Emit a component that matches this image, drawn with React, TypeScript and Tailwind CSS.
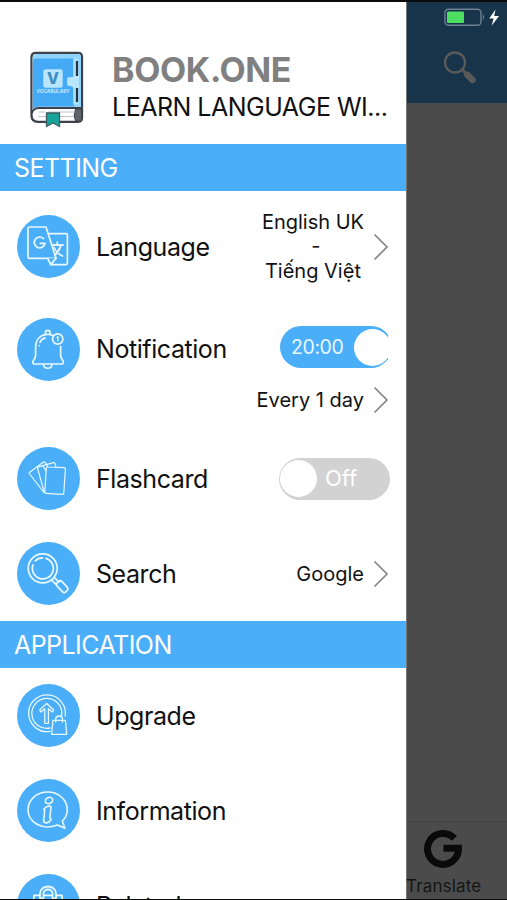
import { ReactNode } from 'react';

export default function App() {
    return (
        <div className="flex h-[900px] w-[507px] overflow-hidden border-t-2 border-b border-[#0b0b0b] bg-[#4b4b4b] font-[Inter,sans-serif] text-[#111]">
            {/* Drawer */}
            <aside className="flex w-[406px] shrink-0 flex-col overflow-hidden bg-white">
                <header className="flex h-[142px] shrink-0 items-start pl-[30px] pt-[49px]">
                    <BookLogo />
                    <div className="ml-7 whitespace-nowrap">
                        <h1 className="h-[38px] text-[34px] font-bold leading-[38px] tracking-[-0.35px] text-[#808080]">BOOK.ONE</h1>
                        <p className="text-[25px] leading-[36px] tracking-[-0.5px]">LEARN LANGUAGE WI...</p>
                    </div>
                </header>

                <SectionTitle>SETTING</SectionTitle>
                <Row icon={<TranslateIcon />} label="Language" className="h-[111px]">
                    <div className="text-center text-[20px] leading-[24.5px]">
                        English UK
                        <br />
                        <span className="pl-[6px]">-</span>
                        <br />
                        Tiếng Việt
                    </div>
                    <Chevron />
                </Row>
                <div className="h-[129px] shrink-0">
                    <Row icon={<BellIcon />} label="Notification" className="h-[94px]">
                        <div className="mr-[18px] w-[108px] -translate-y-[2px] overflow-hidden">
                            <div className="flex h-[42px] w-[112px] items-center justify-between rounded-full bg-[#4baef8] pl-[11px] pr-[1px]">
                                <span className="pt-[2px] text-[19.5px] tracking-[-0.4px] text-[#eaf7ff]">20:00</span>
                                <span className="size-[37px] rounded-full bg-white" />
                            </div>
                        </div>
                    </Row>
                    <div className="flex h-[8px] items-center justify-end text-[20px]">
                        Every 1 day
                        <Chevron />
                    </div>
                </div>
                <Row icon={<CardsIcon />} label="Flashcard" className="h-[95px]">
                    <div className="mr-4 flex h-[42px] w-[111px] items-center rounded-full bg-[#d2d2d2] pl-[1px]">
                        <span className="size-[37px] rounded-full bg-white" />
                        <span className="ml-2 text-[22px] text-white">Off</span>
                    </div>
                </Row>
                <Row icon={<SearchIcon />} label="Search" className="h-[95px]">
                    <span className="text-[20px]">Google</span>
                    <Chevron />
                </Row>

                <SectionTitle>APPLICATION</SectionTitle>
                <Row icon={<UpgradeIcon />} label="Upgrade" className="h-[95px]" />
                <Row icon={<InfoIcon />} label="Information" className="h-[95px]" />
                <Row icon={<RelatedIcon />} label="Related" className="h-[95px]" />
            </aside>

            {/* Dimmed screen behind the drawer */}
            <main className="flex flex-1 flex-col border-l border-[#777]">
                <div className="h-[101px] bg-[#17344b]">
                    <div className="flex pl-[37px] pt-[6px]">
                        <svg width="58" height="20" viewBox="0 0 58 20">
                            <rect x="1" y="1.2" width="36" height="16" rx="3.5" fill="none" stroke="#6d8190" strokeWidth="1.4" />
                            <rect x="3" y="3.5" width="17" height="11.5" rx="1" fill="#4cdf62" />
                            <path d="M38.8 6q2.6 3.2 0 6.4z" fill="#6d8190" />
                            <path d="M51.5 1.5 45.2 10.4h4.4l-2 7.4 7.4-9.8h-4.8z" fill="#fff" />
                        </svg>
                    </div>
                    <svg className="ml-[36px] mt-[22px]" width="34" height="35" viewBox="0 0 34 35" fill="none" stroke="#5a5a59">
                        <circle cx="12" cy="12.5" r="10" strokeWidth="2.3" />
                        <path d="m19.5 20 5 5" strokeWidth="3" />
                        <path d="m24.5 25 5 5" strokeWidth="6.5" strokeLinecap="round" />
                    </svg>
                </div>
                <div className="flex-1" />
                <div className="h-[78px] border-t border-[#414141] text-[#151515]">
                    <svg className="ml-[16px] mt-[7px]" width="40" height="40" viewBox="0 0 40 40" fill="none" stroke="#0a0a0a" strokeWidth="7">
                        <path d="M31.4 9.4A15.5 15.5 0 1 0 35.5 19.2H20.5" />
                    </svg>
                    <p className="-ml-px mt-[5px] text-[17px] leading-[24px] tracking-[0.15px]">Translate</p>
                </div>
            </main>
        </div>
    );
}

function SectionTitle({ children }: { children: ReactNode }) {
    return (
        <h2 className="h-[47px] shrink-0 bg-[#4baef8] pl-[14px] text-[25px] leading-[48px] tracking-[-0.55px] text-white">{children}</h2>
    );
}

function Row({ icon, label, className, children }: { icon: ReactNode, label: string, className: string, children?: ReactNode }) {
    return (
        <div className={`flex shrink-0 items-center pl-[17px] ${className}`}>
            <div className="size-[63px] shrink-0 rounded-full bg-[#4baef8]">{icon}</div>
            <span className="ml-4 pt-[2px] text-[25px] tracking-[-0.43px]">{label}</span>
            <div className="ml-auto flex items-center">{children}</div>
        </div>
    );
}

function Chevron() {
    return (
        <svg className="ml-[9px] mr-[17px] shrink-0" width="16" height="28" viewBox="0 0 16 28" fill="none" stroke="#858585" strokeWidth="1.7">
            <path d="M1.5 1.5 14 14 1.5 26.5" />
        </svg>
    );
}

function LineIcon({ children, width = 1.7 }: { children: ReactNode, width?: number }) {
    return (
        <svg width="63" height="63" viewBox="0 0 63 63" fill="none" stroke="#e8f8ff" strokeWidth={width} strokeLinejoin="round" strokeLinecap="round">
            {children}
        </svg>
    );
}

function TranslateIcon() {
    return (
        <LineIcon>
            <path d="M31.7 18.6H49q1.4 0 1.4 1.4v28q0 1.6-1.4 1.6H33.7" />
            <path d="M34.5 30h11.3M40.3 27v3M44 30q-1.5 7-8 11M37 32.5q2.5 5.5 8.5 8.5" />
            <path d="M12.4 12H29l10 31.3H12.4q-1.4 0-1.4-1.4V13.4q0-1.4 1.4-1.4z" fill="#4baef8" />
            <path d="m30.7 43.3 3 6.3 5.3-6.3" fill="#4baef8" />
            <path d="M36.2 30h9.6M42.5 33.5q-2 4.5-4.5 6.5" />
            <path d="M26.5 23.6A5.4 5.4 0 1 0 28 28.3h-4.7" />
        </LineIcon>
    );
}

function BellIcon() {
    return (
        <LineIcon>
            <path d="M28.3 16.7v-2a2.4 2.4 0 0 1 4.8 0v2M36 17.6Q33 16.2 30 16.4C23 17 18.8 22 18.6 29v8q0 3-2 5.2c-1.3 1.6-1 3.8 1 3.8h27c2 0 2.3-2.2 1-3.8q-2-2.2-2-5.2v-8.6" />
            <circle cx="40.7" cy="21" r="5.2" />
            <path d="m40 19.5 1-.8v4.4" strokeWidth="1.2" />
            <path d="M26.5 46.5c.5 5 8 5 8.6 0M22.3 27.5v0M23 24.5q1.2-3.7 5-4.4" />
        </LineIcon>
    );
}

function CardsIcon() {
    return (
        <LineIcon width={1.2}>
            <path d="M27 45.5 12.6 27q-.8-1 .2-1.8l13.4-10q1.2-.9 2 .2l2.5 4" />
            <path d="m27.3 45.3-6.7-24q-.3-1.2.8-1.5l15-4.2q1.3-.3 1.6.8l1 3.8M25.7 18.6l3.4 5.4" />
            <path d="m30.7 20 16.4.7q1.4.1 1.3 1.5l-1.6 23.8q-.1 1.4-1.5 1.3l-16.2-1q-1.4-.1-1.3-1.5l1.5-23.5q.1-1.4 1.4-1.3z" />
        </LineIcon>
    );
}

function SearchIcon() {
    return (
        <LineIcon>
            <circle cx="25.7" cy="26.3" r="14.5" />
            <path d="M16 22.8A10.5 10.5 0 1 0 29 16.4M18.2 18.8A10.5 10.5 0 0 1 25.5 15.8" />
            <path d="m34.7 38.3 4.6 4.2M37.3 35.7l4.6 4.4" />
            <rect x="39" y="41.2" width="12.5" height="6.6" rx="2.5" transform="rotate(47 45 44.5)" />
        </LineIcon>
    );
}

function UpgradeIcon() {
    return (
        <LineIcon width={1.3}>
            <path d="M48.2 32A18.4 18.4 0 1 0 33 47.4" />
            <path d="M44.7 31.5A15 15 0 1 0 33 44" />
            <path d="m29.7 19.5 7 6.5-1.3 2-4-3.3v14.6h-3.6V24.7l-3.9 3.3-1.3-2z" />
            <path d="M36 36.3h12.4l1.3 14H34.6zM38.7 38v-2.6a3.4 3.4 0 0 1 6.8 0V38" />
        </LineIcon>
    );
}

function InfoIcon() {
    return (
        <LineIcon width={1.6}>
            <path d="M40.5 46C25 52 11 43 11 30.8 11 20.8 19.7 13 30.7 13s19.6 8 19.6 17.8c0 4.5-1.9 8.4-5 11.4l2.6 7z" />
            <ellipse cx="32" cy="21.5" rx="3.8" ry="3" transform="rotate(-25 32 21.5)" />
            <path d="M27.2 29.7q2.5-3 6.2-2.5.8 0 .6 1.2l-1.2 10.6q1.6.5 1.1 2-2.2 3.5-5.7 2.7-1.8-.6-1.5-2.7l1-9.5q-1.4-.2-.5-1.8z" />
        </LineIcon>
    );
}

function RelatedIcon() {
    return (
        <LineIcon width={1.8}>
            <path d="M17 21.3h6M39 21.3h6l2 30H15l2-30M27 21.3h8" />
            <path d="M23 24.5v-5a8 7 0 0 1 16 0v5h-3.5v-5a4.5 4 0 0 0-9 0v5z" />
        </LineIcon>
    );
}

function BookLogo() {
    return (
        <svg className="shrink-0" width="54" height="77" viewBox="0 0 54 77">
            <path d="M6 1.8h42q4 0 4 4v61q0 4-4 4H8q-6.5 0-6.5-6.5V6.3q0-4.5 4.5-4.5z" fill="#fff" stroke="#3e4249" strokeWidth="2.3" />
            <path d="M6.5 3h41q3.5 0 3.5 3.5V56H8.5q-4 0-5.8 3V7q0-4 3.8-4z" fill="#8fd4ff" />
            <path d="M6 7.5h38v48H8q-3 0-5 2V10.5q0-3 3-3z" fill="#45aaf6" />
            <path d="M2 62q1.4-5 7-5h42.5" fill="none" stroke="#3e4249" strokeWidth="1.8" />
            <path d="M45.5 58h6v12h-6q-2.5-6 0-12z" fill="#62656a" stroke="#3e4249" />
            <path d="M9 61h6m3 0h27M8 65.5h36" stroke="#bfc6ca" strokeWidth="1.1" />
            <rect x="43.2" y="7.5" width="5.5" height="46" fill="#ace2ff" />
            <path d="M47 10v17.5M47 34v17" stroke="#25343f" strokeWidth="2.2" />
            <path d="M39 26q4.5 1 6-2.5V39q-1.5-4-6-4-2 0-2-4.5t2-4.5z" fill="#b9e5ff" />
            <path d="M43 25h6v12h-6z" fill="#b9e5ff" />
            <rect x="13.3" y="18.3" width="19.4" height="18.4" rx="2.5" fill="#b9e5ff" />
            <text x="23" y="33" textAnchor="middle" fontSize="15.5" fontWeight="800" fontFamily="Inter, sans-serif" fill="#408dc4">V</text>
            <text x="6.5" y="42.3" fontSize="4.6" fontWeight="700" textLength="33" fontFamily="Inter, sans-serif" fill="#c7ebff">VOCABULARY</text>
            <path d="M16.5 62h13v13.5L23 72l-6.5 3.5z" fill="#16a59b" stroke="#3e5b60" strokeWidth="1.3" />
        </svg>
    );
}
